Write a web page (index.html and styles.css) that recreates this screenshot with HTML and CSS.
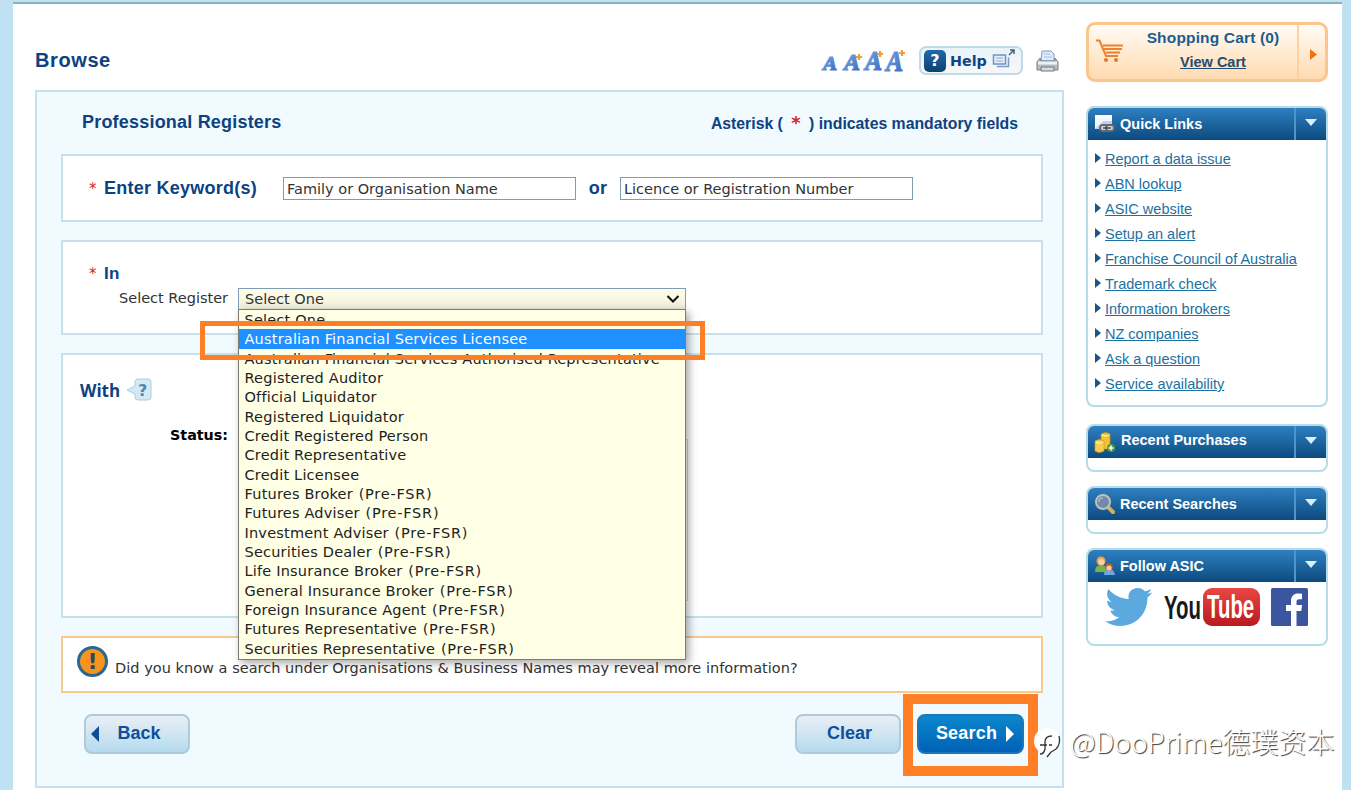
FILE: index.html
```html
<!DOCTYPE html>
<html lang="en">

<head>
    <meta charset="UTF-8">
    <meta name="viewport" content="width=device-width, initial-scale=1.0">
    <title>Professional Registers</title>
    <link rel="stylesheet" href="styles.css">
</head>

<body>
    <div class="page">
        <div class="main">
            <div class="title-row">
                <h1>Browse</h1>
                <div class="tools">
                    <svg class="text-sizes" width="90" height="32" viewBox="0 -4 90 32">
                        <defs>
                            <linearGradient id="letter" x1="0" y1="0" x2="1" y2="1">
                                <stop offset="0" stop-color="#82b2ec"/>
                                <stop offset="1" stop-color="#3566b8"/>
                            </linearGradient>
                        </defs>
                        <g class="letters" fill="url(#letter)" stroke="url(#letter)" stroke-width="1.2">
                            <text x="3" y="24" font-size="19" textLength="14" lengthAdjust="spacingAndGlyphs">A</text>
                            <text x="24" y="24" font-size="23" textLength="16" lengthAdjust="spacingAndGlyphs">A</text>
                            <text x="45" y="24" font-size="27" textLength="17" lengthAdjust="spacingAndGlyphs">A</text>
                            <text x="66" y="25" font-size="29" textLength="17" lengthAdjust="spacingAndGlyphs">A</text>
                        </g>
                        <path d="M36 11h6M39 8v6M57 8h6M60 5v6M79 7h6M82 4v6" stroke="#f59a3a" stroke-width="2.2"/>
                    </svg>
                    <a href="#" class="help">
                        <span class="help-mark">?</span>Help
                        <svg width="24" height="20" viewBox="0 0 24 20" fill="none">
                            <path d="M5 17.500h11.500v-9" stroke="#7e9bc8" stroke-width="1.500"/>
                            <rect x="1.500" y="6" width="12" height="9" fill="#e6effa" stroke="#7391c5" stroke-width="1.500"/>
                            <path d="M4 9h7M4 12h7" stroke="#8ba8d6"/>
                            <path d="M17 6l5-5M18 1h4v4" stroke="#405c77" stroke-width="1.400"/>
                        </svg>
                    </a>
                    <svg class="printer" width="24" height="24" viewBox="0 0 24 24">
                        <path d="M5 11L6 1h9l3 3v7z" fill="#dcecff" stroke="#8099bd"/>
                        <path d="M8 4h6M8 7h8" stroke="#a1c1e9"/>
                        <path d="M4 8l-3 4v8h21v-8l-3-4v3H5z" fill="#b7bdc6" stroke="#747e8c"/>
                        <path d="M2 13h19" stroke="#eef1f4" stroke-width="3"/>
                        <path d="M5 17h13v4H5z" fill="#d7dade" stroke="#6e7680"/>
                    </svg>
                </div>
            </div>

            <div class="panel">
                <div class="panel-head">
                    <h2>Professional Registers</h2>
                    <p>Asterisk ( <span class="required big">*</span> ) indicates mandatory fields</p>
                </div>

                <div class="box keyword-box">
                    <span class="required">*</span>
                    <label class="heading">Enter Keyword(s)</label>
                    <div class="input">Family or Organisation Name</div>
                    <span class="heading or">or</span>
                    <div class="input">Licence or Registration Number</div>
                </div>

                <div class="box register-box">
                    <div class="in-row"><span class="required">*</span><span class="heading">In</span></div>
                    <div class="register-row">
                        <label>Select Register</label>
                        <div class="select">
                            <span>Select One</span>
                            <svg width="14" height="10" viewBox="0 0 14 10"><path d="M1.500 2l5.500 5.500L12.500 2" fill="none" stroke="#111" stroke-width="2"/></svg>
                            <ul class="options">
                                <li>Select One</li>
                                <li class="selected">Australian Financial Services Licensee</li>
                                <li>Australian Financial Services Authorised Representative</li>
                                <li>Registered Auditor</li>
                                <li>Official Liquidator</li>
                                <li>Registered Liquidator</li>
                                <li>Credit Registered Person</li>
                                <li>Credit Representative</li>
                                <li>Credit Licensee</li>
                                <li>Futures Broker <span class="pre">(Pre-FSR)</span></li>
                                <li>Futures Adviser <span class="pre">(Pre-FSR)</span></li>
                                <li>Investment Adviser <span class="pre">(Pre-FSR)</span></li>
                                <li>Securities Dealer <span class="pre">(Pre-FSR)</span></li>
                                <li>Life Insurance Broker <span class="pre">(Pre-FSR)</span></li>
                                <li>General Insurance Broker <span class="pre">(Pre-FSR)</span></li>
                                <li>Foreign Insurance Agent <span class="pre">(Pre-FSR)</span></li>
                                <li>Futures Representative <span class="pre">(Pre-FSR)</span></li>
                                <li>Securities Representative <span class="pre">(Pre-FSR)</span></li>
                            </ul>
                            <div class="mark option-mark"></div>
                        </div>
                    </div>
                </div>

                <div class="box with-box">
                    <div class="with-row">
                        <span class="with-label">With</span>
                        <svg width="28" height="24" viewBox="0 0 28 24">
                            <path d="M9 4q0-3 3-3h10q3 0 3 3v15q0 3-3 3H12q-3 0-3-3v-3L1 12l8-4z" fill="#d3e9f6" stroke="#a9cde3"/>
                            <text x="12" y="17.500" class="bubble-mark">?</text>
                        </svg>
                    </div>
                    <div class="status-row">
                        <span class="status-label">Status:</span>
                        <div class="status-list"></div>
                    </div>
                </div>

                <div class="notice">
                    <span class="notice-icon">!</span>
                    <p>Did you know a search under Organisations &amp; Business Names may reveal more information?</p>
                </div>

                <div class="buttons">
                    <button class="button back"><svg width="9" height="16" viewBox="0 0 9 16"><path d="M8 0v16L0 8z" fill="#0d4f99"/></svg>Back</button>
                    <button class="button clear">Clear</button>
                    <div class="search-wrap">
                        <button class="button search">Search<svg width="8" height="16" viewBox="0 0 8 16"><path d="M0 0l8 8-8 8z" fill="#fff"/></svg></button>
                        <div class="mark search-mark"></div>
                    </div>
                </div>
            </div>
        </div>

        <div class="sidebar">
            <div class="cart">
                <svg width="30" height="24" viewBox="0 0 30 24" fill="none" stroke="#ee8130">
                    <path d="M1 1.500h3.500L11 17h12" stroke-width="2"/>
                    <path d="M8 6.500h20M9 10h18M11 13.500h14" stroke-width="2.200"/>
                    <circle cx="11" cy="21" r="2" fill="#e97522" stroke="none"/>
                    <circle cx="21" cy="21" r="2" fill="#e97522" stroke="none"/>
                </svg>
                <div class="cart-text">
                    <strong>Shopping Cart (0)</strong>
                    <a href="#">View Cart</a>
                </div>
                <div class="cart-arrow"><svg width="7" height="11" viewBox="0 0 7 11"><path d="M0 0l7 5.500L0 11z" fill="#ee730f"/></svg></div>
            </div>

            <div class="widget quick">
                <div class="widget-head">
                    <svg width="22" height="22" viewBox="0 0 22 22">
                        <path d="M1 2h17v14H1z" fill="#f3f7fc"/><path d="M1 16l8-8h9v8z" fill="#bdd2ee"/>
                        <path d="M1 2h17v3H1z" fill="#fff"/>
                        <g fill="#ddd" stroke="#626a72" stroke-width="2"><rect x="6" y="12" width="8" height="6" rx="3"/><rect x="12" y="12" width="8" height="6" rx="3"/></g>
                        <path d="M9 15h8" stroke="#42484d" stroke-width="1.500"/>
                    </svg>
                    <h3>Quick Links</h3>
                    <span class="toggle"></span>
                </div>
                <ul class="links">
                    <li><a href="#">Report a data issue</a></li>
                    <li><a href="#">ABN lookup</a></li>
                    <li><a href="#">ASIC website</a></li>
                    <li><a href="#">Setup an alert</a></li>
                    <li><a href="#">Franchise Council of Australia</a></li>
                    <li><a href="#">Trademark check</a></li>
                    <li><a href="#">Information brokers</a></li>
                    <li><a href="#">NZ companies</a></li>
                    <li><a href="#">Ask a question</a></li>
                    <li><a href="#">Service availability</a></li>
                </ul>
            </div>

            <div class="widget purchases">
                <div class="widget-head">
                    <svg width="22" height="22" viewBox="0 0 22 22">
                        <path d="M7 3q5-3 9 0v15H7z" fill="#f2c22f" stroke="#c99419" stroke-width=".7"/>
                        <path d="M1 10q4-3 9 0v10q-5 3-9 0z" fill="#f9cf4a" stroke="#cc981d" stroke-width=".7"/>
                        <path d="M8 4q4 2 7 0M2 11q4 2 7 0" fill="none" stroke="#fff0a6" stroke-width="1.500"/>
                        <circle cx="17" cy="17" r="4" fill="#469b40"/>
                        <path d="M17 14.500v5M14.500 17h5" stroke="#fff" stroke-width="1.600"/>
                    </svg>
                    <h3>Recent Purchases</h3>
                    <span class="toggle"></span>
                </div>
            </div>

            <div class="widget searches">
                <div class="widget-head">
                    <svg width="22" height="22" viewBox="0 0 22 22">
                        <path d="M14 14l5 5" stroke="#d9ae59" stroke-width="4" stroke-linecap="round"/>
                        <circle cx="9" cy="9" r="7" fill="#7189ad" stroke="#bfc2b8" stroke-width="2"/>
                        <path d="M5 9q0-4 4-4" fill="none" stroke="#a6b9d3" stroke-width="1.500"/>
                    </svg>
                    <h3>Recent Searches</h3>
                    <span class="toggle"></span>
                </div>
            </div>

            <div class="widget follow">
                <div class="widget-head">
                    <svg width="22" height="22" viewBox="0 0 22 22">
                        <path d="M1 17q0-7 6-7t6 7z" fill="#7ab24a"/>
                        <circle cx="7" cy="6" r="4.500" fill="#e7a850"/><circle cx="7.500" cy="7" r="3" fill="#f7d2a0"/>
                        <path d="M10 20q0-6 5-6t6 6z" fill="#6fa6e4"/>
                        <circle cx="15" cy="12" r="3.800" fill="#bd573a"/><circle cx="15" cy="13" r="2.600" fill="#f5cba0"/>
                    </svg>
                    <h3>Follow ASIC</h3>
                    <span class="toggle"></span>
                </div>
                <div class="social">
                    <svg class="twitter" width="48" height="40" viewBox="0 0 48 40">
                        <path fill="#5ba9df" d="M47 5.500c-1.800.8-3 1.100-4.800 1.300 2-1.100 3.200-2.800 3.800-4.800-2 1.100-4 1.900-6.200 2.300C38 2 35.400 1 32.500 1c-6 0-10 5-8.800 11C15.500 11.600 8.500 8 3.500 2 .800 6.700 2.300 12 6.500 14.800c-1.600 0-3.100-.4-4.400-1.200 0 4.900 3.200 8.600 7.700 9.600-1.500.4-3 .5-4.400.2 1.200 3.900 4.800 6.600 9 6.700C10.500 33.300 5.500 35 0 34.300 4.600 37.300 9.500 39 15 39c17.500 0 28-14.200 27.400-28.500 1.800-1.300 3.400-3.100 4.600-5z"/>
                    </svg>
                    <div class="youtube"><span class="you">You</span><span class="tube"><span>Tube</span></span></div>
                    <svg width="37" height="38" viewBox="0 0 37 38">
                        <rect width="37" height="38" rx="1.500" fill="#3c559f"/>
                        <path fill="#fff" d="M20 38V23h-5v-6h5v-4c0-5 3-7.500 7-7.500 1.600 0 3.200.1 4 .3v5.400h-3c-2 0-2.500 1-2.500 2.700V17h5.600l-.8 6H25.500v15z"/>
                    </svg>
                </div>
            </div>
        </div>
    </div>

    <div class="watermark">
        <svg width="30" height="32" viewBox="0 0 30 32">
            <circle cx="13" cy="13" r="13" fill="#fff"/>
            <path d="M6 26q4 0 5-5V14q0-6 7-6M6 17h7M15 17h3M25 8q2 8-3 13-3 2-5 3l-4 5" fill="none" stroke="#333" stroke-width="1.300"/>
        </svg>
        <span>@DooPrime德璞资本</span>
    </div>
</body>

</html>
```
FILE: styles.css
```css
* {
    box-sizing: border-box;
}

body {
    margin: 0;
    height: 790px;
    overflow: hidden;
    position: relative;
    background: #c0e1f1;
    font-family: "DejaVu Sans", Verdana, sans-serif;
    font-size: 14.5px;
    color: #333;
    white-space: nowrap;
}

h1, h2, h3, p, ul {
    margin: 0;
    padding: 0;
}

ul {
    list-style: none;
}

h1, h2, h3, .heading, .panel-head p, .button, .sidebar {
    font-family: "Liberation Sans", Arial, sans-serif;
}

.page {
    display: flex;
    align-items: flex-start;
    gap: 22px;
    width: 1329px;
    height: 788px;
    margin: 2px 0 0 13px;
    padding: 0 14px 0 22px;
    background: #fff;
    border-top: 2px solid #8eafc0;
    position: absolute;
}

/* left column */
.main {
    width: 1029px;
}

.title-row {
    display: flex;
    justify-content: space-between;
    height: 86px;
    padding-top: 42px;
}

h1 {
    font-size: 20px;
    line-height: 28px;
    letter-spacing: 0.6px;
    color: #0d4282;
}

.tools {
    display: flex;
    align-items: flex-start;
    padding-right: 4px;
}

.text-sizes {
    margin: -4px 9px 0 0;
}

.letters {
    font-family: "Liberation Serif", serif;
    font-weight: bold;
    font-style: italic;
}

.help {
    display: flex;
    align-items: center;
    width: 104px;
    height: 29px;
    padding-left: 3px;
    border: 2px solid #c0dbe8;
    border-radius: 7px;
    background: linear-gradient(#e8f3f9, #f7f7f8);
    color: #0b4584;
    font-size: 14.3px;
    font-weight: bold;
    line-height: 22px;
    text-decoration: none;
}

.help svg {
    margin: -3px 0 0 5px;
}

.help-mark {
    width: 22px;
    height: 22px;
    margin-right: 4px;
    border-radius: 5px;
    background: linear-gradient(#1f69a8, #0d416f);
    color: #fff;
    font-size: 16px;
    line-height: 21px;
    text-align: center;
}

.printer {
    margin: 4px 0 0 13px;
}

.panel {
    height: 698px;
    padding: 0 19px 0 24px;
    border: 2px solid #c7e1ec;
    background: #f1fafe;
}

.panel-head {
    display: flex;
    justify-content: space-between;
    height: 62px;
    padding: 19px 25px 0 21px;
    color: #0d4282;
    font-weight: bold;
}

h2 {
    font-size: 18px;
    line-height: 22px;
    letter-spacing: 0.2px;
}

.panel-head p {
    font-size: 15.8px;
    line-height: 25px;
}

.heading {
    color: #0d4282;
    font-size: 18px;
    font-weight: bold;
    letter-spacing: 0.25px;
}

.required {
    width: 15px;
    color: #d7252b;
    font-size: 15px;
}

.required.big {
    margin: 0 4px;
    font-family: "DejaVu Sans", sans-serif;
    font-size: 18px;
    line-height: 18px;
}

.box, .notice {
    width: 982px;
    border: 2px solid #c7e1ec;
    background: #fff;
}

.keyword-box {
    display: flex;
    align-items: center;
    height: 68px;
    padding: 0 0 0 26px;
}

.keyword-box .heading {
    width: 179px;
}

.keyword-box .required {
    padding-top: 2px;
}

.keyword-box .or {
    width: 44px;
    text-align: center;
}

.input {
    width: 293px;
    height: 23px;
    padding-left: 3px;
    border: 1px solid #809db0;
    line-height: 22px;
}

.register-box {
    height: 95px;
    margin-top: 18px;
    padding: 21px 0 0 26px;
}

.in-row {
    display: flex;
    height: 25px;
}

.in-row .required {
    padding-top: 2px;
}

.in-row .heading {
    font-size: 17px;
    line-height: 21px;
}

.register-row {
    display: flex;
    padding-left: 30px;
}

.register-row label {
    width: 119px;
    line-height: 20px;
}

.select {
    position: relative;
    display: flex;
    align-items: center;
    justify-content: space-between;
    width: 448px;
    height: 22px;
    padding: 0 5px 0 6px;
    border: 1px solid #7f9db9;
    background: linear-gradient(#ffffe8, #eeeedd);
}

.options {
    position: absolute;
    z-index: 2;
    top: 20px;
    left: -1px;
    width: 448px;
    height: 351px;
    border: 1px solid #7c7c70;
    background: #ffffe6;
    box-shadow: 3px 3px 8px rgba(0, 0, 0, 0.35);
    color: #222;
    letter-spacing: 0.2px;
}

.options li {
    height: 19.34px;
    padding-left: 5.5px;
    line-height: 20.6px;
}

.options .pre {
    margin-left: 1px;
    letter-spacing: 0.75px;
}

.options .selected {
    background: #1e90ff;
    color: #fff;
}

/* orange call-outs over the form */
.mark {
    position: absolute;
    z-index: 3;
    border: 5px solid #ff7f27;
}

.option-mark {
    top: 32px;
    left: -39px;
    width: 505px;
    height: 39px;
}

.with-box {
    height: 265px;
    margin-top: 18px;
    padding: 22px 0 0 17px;
}

.with-row {
    display: flex;
    align-items: center;
    gap: 6px;
    height: 26px;
}

.with-label {
    color: #0d4282;
    font-family: "Open Sans", sans-serif;
    font-size: 17px;
    font-weight: bold;
}

.bubble-mark {
    fill: #5486ad;
    font-size: 16px;
    font-weight: bold;
}

.status-row {
    display: flex;
    gap: 11px;
    padding: 22px 0 0 90px;
}

.status-label {
    height: 20px;
    line-height: 20px;
    color: #000;
    font-size: 14.3px;
    font-weight: bold;
}

.status-list {
    width: 449px;
    height: 162px;
    margin-top: 14px;
    border: 1px solid #d8d8d8;
}

.notice {
    display: flex;
    height: 57px;
    margin-top: 18px;
    padding: 8px 0 0 14px;
    border-color: #f7c98d;
}

.notice-icon {
    width: 31px;
    height: 31px;
    margin-right: 7px;
    border: 3px solid #2b6793;
    border-radius: 50%;
    background: #f7941e;
    color: #24476b;
    font-size: 22px;
    font-weight: bold;
    line-height: 25px;
    text-align: center;
}

.notice p {
    line-height: 44px;
    letter-spacing: 0.03px;
}

.buttons {
    display: flex;
    padding: 21px 0 0 23px;
}

.button {
    display: flex;
    align-items: center;
    justify-content: center;
    width: 106px;
    height: 40px;
    padding: 0 0 2px;
    border: 2px solid #aecbda;
    border-radius: 8px;
    background: linear-gradient(#eaeef6, #b4dbee);
    color: #0d4f99;
    font-size: 18px;
    font-weight: bold;
}

.back svg {
    margin: 2px 17px 0 -22px;
}

.clear {
    margin-left: 605px;
    padding-left: 3px;
}

.search-wrap {
    position: relative;
    margin-left: 16px;
}

.button.search {
    width: 107px;
    padding-left: 9px;
    border-color: #2174b8;
    background: linear-gradient(#0b87cd, #0061b5);
    color: #fff;
    letter-spacing: 0.2px;
}

.search svg {
    margin: 2px 0 0 9px;
}

.search-mark {
    top: -20px;
    left: -14px;
    width: 135px;
    height: 82px;
    border-width: 10px;
}

/* right column */
.sidebar {
    width: 242px;
    padding-top: 18px;
}

.cart {
    display: flex;
    height: 60px;
    border: 3px solid #fbc58c;
    border-radius: 9px;
    background: linear-gradient(#fffcf5, #ffdab0);
}

.cart > svg {
    margin: 14px 0 0 6px;
}

.cart-text {
    display: flex;
    flex-direction: column;
    align-items: center;
    width: 172px;
    padding: 4px 0 0 4px;
    color: #1b5c91;
    font-size: 15.5px;
    letter-spacing: 0.16px;
    line-height: 18px;
}

.cart-text a {
    margin-top: 6px;
    color: #244c70;
    font-size: 14.5px;
    font-weight: bold;
    letter-spacing: 0;
}

.cart-arrow {
    display: flex;
    align-items: center;
    justify-content: center;
    flex: 1;
    border-left: 2px solid #fbd0a2;
}

.cart-arrow svg {
    margin: 5px 0 0 3px;
}

.widget {
    border: 2px solid #b6dbea;
    border-radius: 8px;
    background: #fff;
}

.quick {
    height: 301px;
    margin-top: 24px;
}

.purchases {
    height: 48px;
    margin-top: 17px;
}

.searches {
    height: 48px;
    margin-top: 14px;
}

.follow {
    height: 98px;
    margin-top: 14px;
}

.widget-head {
    display: flex;
    align-items: center;
    height: 32px;
    padding-left: 6px;
    border-radius: 6px 6px 0 0;
    background: linear-gradient(#2e80c1, #0c4a7e);
    color: #fff;
}

h3 {
    flex: 1;
    margin: -1px 0 0 4px;
    font-size: 14.5px;
}

.purchases h3 {
    margin: -4px 0 0 5px;
}

.toggle {
    display: flex;
    justify-content: center;
    width: 32px;
    height: 32px;
    padding-top: 11px;
    border-left: 2px solid #4e96c9;
}

.toggle::before {
    content: "";
    width: 0;
    height: 0;
    border: 6px solid transparent;
    border-top: 7px solid #dceefa;
    border-bottom: 0;
}

.links {
    padding: 6px 0 0 7px;
}

.links li {
    display: flex;
    align-items: center;
    height: 25.05px;
    font-size: 14.5px;
}

.links li::before {
    content: "";
    margin: -2px 4px 0 0;
    border: 5px solid transparent;
    border-left: 6px solid #17568b;
    border-right: 0;
}

.links a {
    color: #1b719f;
}

.social {
    display: flex;
    align-items: center;
    padding: 5px 0 0 17px;
}

.youtube {
    display: flex;
    align-items: center;
    width: 96px;
    margin: 0 11px;
    font-size: 34px;
    font-weight: bold;
    line-height: 36px;
}

.you, .tube span {
    display: block;
    transform: scaleX(0.6);
    transform-origin: 0 50%;
}

.you {
    width: 39px;
    color: #191919;
}

.tube {
    width: 57px;
    height: 38px;
    padding-left: 4px;
    border-radius: 9px;
    background: linear-gradient(#e94743, #b91b21);
    color: #fff;
}

.watermark {
    position: absolute;
    z-index: 4;
    left: 1034px;
    top: 728px;
    display: flex;
    gap: 6px;
    color: #fff;
    font-family: "Noto Sans CJK SC", sans-serif;
    font-size: 28px;
    font-weight: 300;
    line-height: 26px;
    text-shadow: 1px 1px 1px #333;
}
```
